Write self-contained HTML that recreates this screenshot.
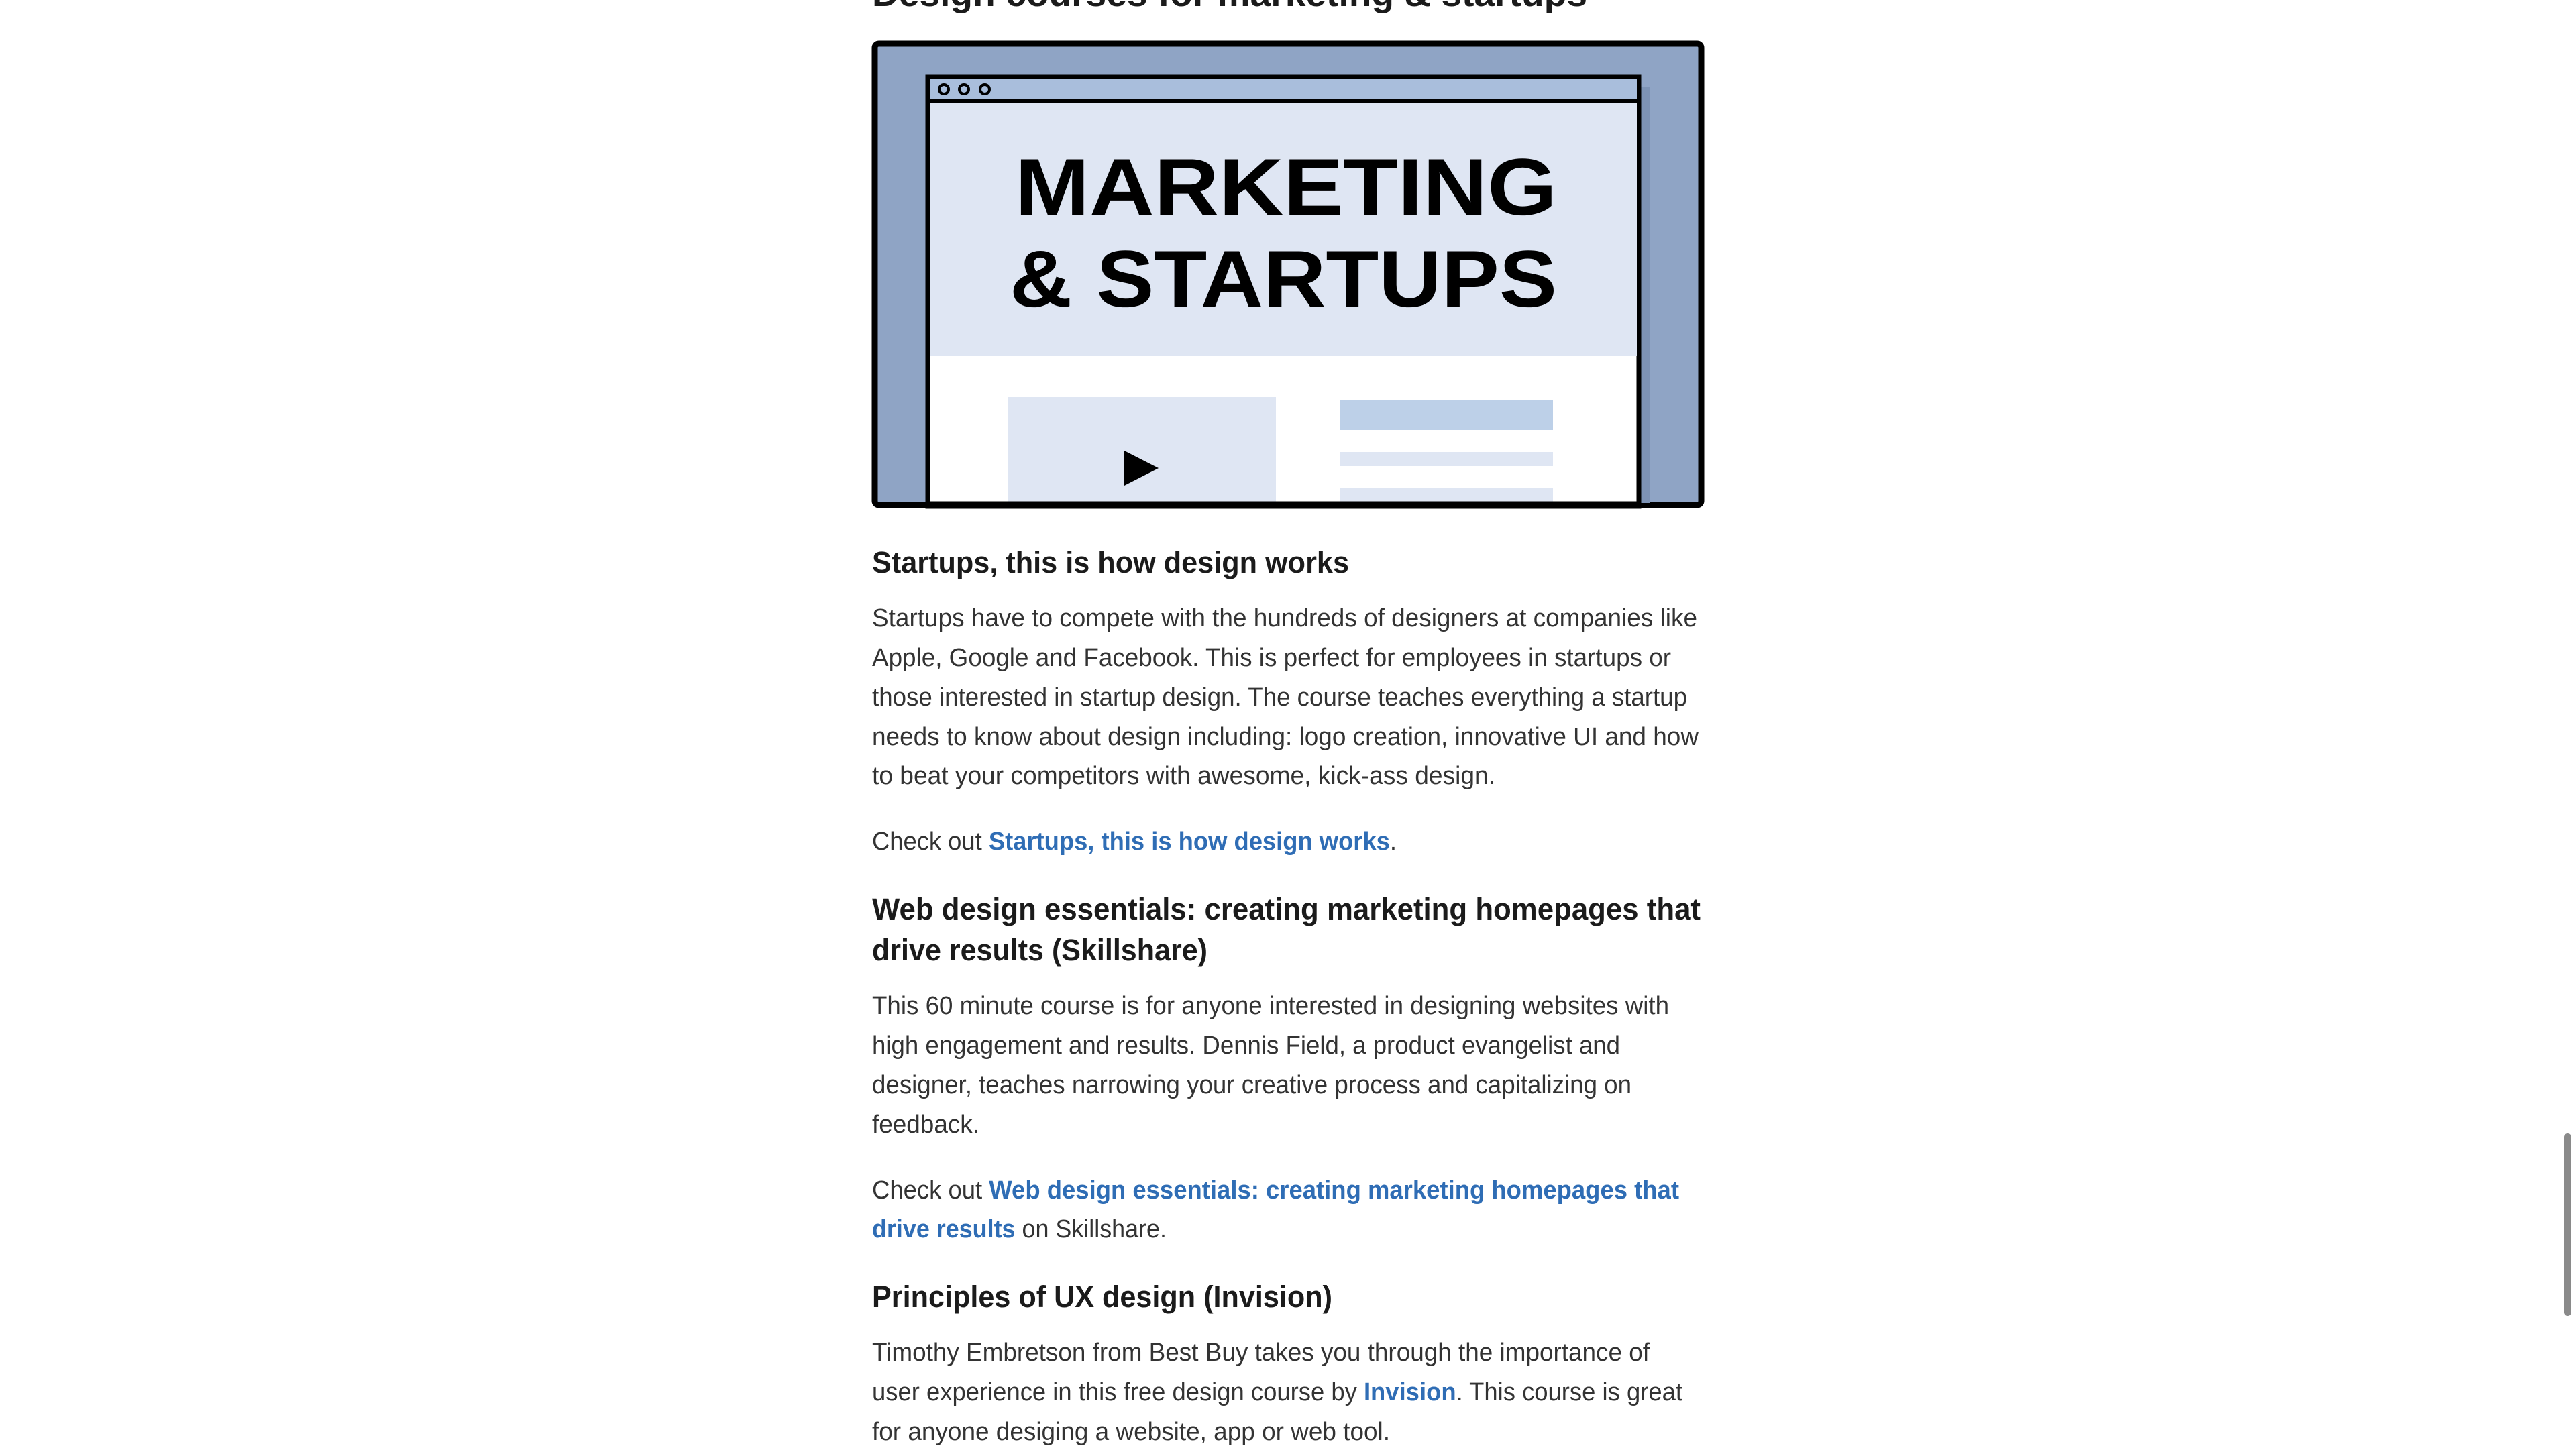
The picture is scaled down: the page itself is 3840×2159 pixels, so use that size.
<!DOCTYPE html>
<html><head><meta charset="utf-8"><style>
html,body{margin:0;padding:0;background:#fff;width:3840px;height:2159px;overflow:hidden}
svg{display:block}
.b{font-family:"Liberation Sans",Arial,sans-serif;font-size:38px;fill:#333}
.h{font-family:"Liberation Sans",Arial,sans-serif;font-size:45px;font-weight:bold;fill:#1b1b1b}
.l{fill:#2f6db5;font-weight:bold}
</style></head><body>
<svg width="3840" height="2159" viewBox="0 0 3840 2159" xmlns="http://www.w3.org/2000/svg">
<text x="1300" y="9" font-family="Liberation Sans,Arial,sans-serif" font-size="54" font-weight="bold" fill="#1b1b1b" textLength="1066" lengthAdjust="spacingAndGlyphs">Design courses for marketing &amp; startups</text>

<!-- illustration -->
<rect x="1304" y="65" width="1232" height="688" rx="6" fill="#8fa4c5" stroke="#000" stroke-width="9"/>
<rect x="2446" y="130" width="14" height="620" fill="#7d93b5"/>
<rect x="1383" y="115" width="1060" height="640" fill="#fff" stroke="#000" stroke-width="7"/>
<rect x="1386" y="118" width="1054" height="32" fill="#a9bedc"/>
<line x1="1383" y1="150" x2="2443" y2="150" stroke="#000" stroke-width="6"/>
<rect x="1386" y="153" width="1054" height="378" fill="#dfe6f3"/>
<circle cx="1407" cy="133" r="7" fill="none" stroke="#000" stroke-width="4"/>
<circle cx="1437" cy="133" r="7" fill="none" stroke="#000" stroke-width="4"/>
<circle cx="1468" cy="133" r="7" fill="none" stroke="#000" stroke-width="4"/>
<text x="1513" y="320" font-family="Liberation Sans,Arial,sans-serif" font-size="120" font-weight="bold" fill="#000" textLength="808" lengthAdjust="spacingAndGlyphs">MARKETING</text>
<text x="1505" y="457" font-family="Liberation Sans,Arial,sans-serif" font-size="120" font-weight="bold" fill="#000" textLength="816" lengthAdjust="spacingAndGlyphs">&amp; STARTUPS</text>
<rect x="1503" y="592" width="399" height="158" fill="#dfe6f3"/>
<polygon points="1676,672 1676,724 1727,698" fill="#000"/>
<rect x="1997" y="596" width="318" height="45" fill="#bdd0e8"/>
<rect x="1997" y="674" width="318" height="21" fill="#dfe6f3"/>
<rect x="1997" y="727" width="318" height="22" fill="#dfe6f3"/>
<line x1="1383" y1="750" x2="2443" y2="750" stroke="#000" stroke-width="5"/>

<text class="h" x="1300" y="854" textLength="711" lengthAdjust="spacingAndGlyphs">Startups, this is how design works</text>
<text class="b" x="1300" y="934" textLength="1230" lengthAdjust="spacingAndGlyphs">Startups have to compete with the hundreds of designers at companies like</text>
<text class="b" x="1300" y="993" textLength="1191" lengthAdjust="spacingAndGlyphs">Apple, Google and Facebook. This is perfect for employees in startups or</text>
<text class="b" x="1300" y="1052" textLength="1215" lengthAdjust="spacingAndGlyphs">those interested in startup design. The course teaches everything a startup</text>
<text class="b" x="1300" y="1111" textLength="1232" lengthAdjust="spacingAndGlyphs">needs to know about design including: logo creation, innovative UI and how</text>
<text class="b" x="1300" y="1169" textLength="929" lengthAdjust="spacingAndGlyphs">to beat your competitors with awesome, kick-ass design.</text>
<text class="b" x="1300" y="1267" textLength="782" lengthAdjust="spacingAndGlyphs">Check out <tspan class="l">Startups, this is how design works</tspan>.</text>

<text class="h" x="1300" y="1371" textLength="1235" lengthAdjust="spacingAndGlyphs">Web design essentials: creating marketing homepages that</text>
<text class="h" x="1300" y="1432" textLength="500" lengthAdjust="spacingAndGlyphs">drive results (Skillshare)</text>
<text class="b" x="1300" y="1512" textLength="1188" lengthAdjust="spacingAndGlyphs">This 60 minute course is for anyone interested in designing websites with</text>
<text class="b" x="1300" y="1571" textLength="1115" lengthAdjust="spacingAndGlyphs">high engagement and results. Dennis Field, a product evangelist and</text>
<text class="b" x="1300" y="1630" textLength="1132" lengthAdjust="spacingAndGlyphs">designer, teaches narrowing your creative process and capitalizing on</text>
<text class="b" x="1300" y="1689" textLength="160" lengthAdjust="spacingAndGlyphs">feedback.</text>
<text class="b" x="1300" y="1787" textLength="1203" lengthAdjust="spacingAndGlyphs">Check out <tspan class="l">Web design essentials: creating marketing homepages that</tspan></text>
<text class="b" x="1300" y="1845" textLength="439" lengthAdjust="spacingAndGlyphs"><tspan class="l">drive results</tspan> on Skillshare.</text>

<text class="h" x="1300" y="1949" textLength="686" lengthAdjust="spacingAndGlyphs">Principles of UX design (Invision)</text>
<text class="b" x="1300" y="2029" textLength="1159" lengthAdjust="spacingAndGlyphs">Timothy Embretson from Best Buy takes you through the importance of</text>
<text class="b" x="1300" y="2088" textLength="1208" lengthAdjust="spacingAndGlyphs">user experience in this free design course by <tspan class="l">Invision</tspan>. This course is great</text>
<text class="b" x="1300" y="2147" textLength="772" lengthAdjust="spacingAndGlyphs">for anyone desiging a website, app or web tool.</text>

<rect x="3822" y="1690" width="11" height="272" rx="5.5" fill="#8a8a8a"/>
</svg>
</body></html>
